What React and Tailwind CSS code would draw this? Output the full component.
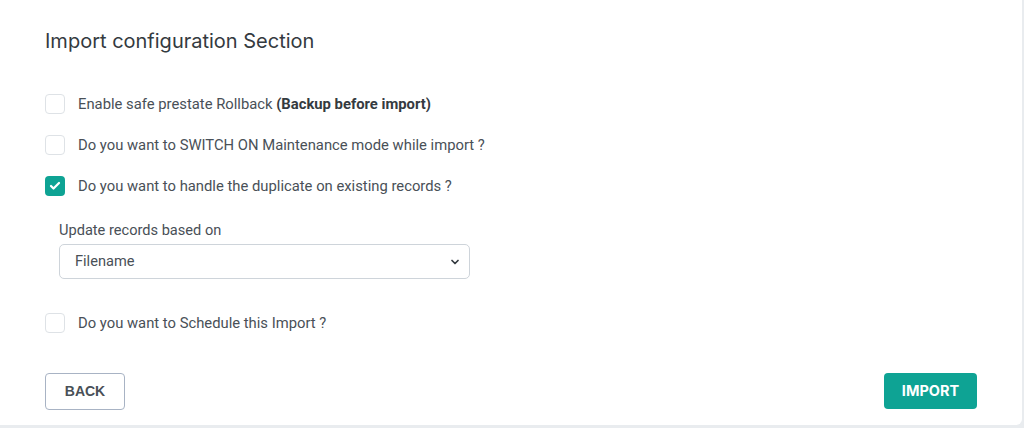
import { Check, ChevronDown } from "lucide-react";

const body = { fontFamily: "Roboto, 'Liberation Sans', sans-serif" };

function CheckRow({ checked, children }) {
  return (
    <label className="flex items-center h-[20px] text-[14.8px] text-[#495057]" style={body}>
      {checked ? (
        <span className="w-[20px] h-[20px] rounded-[4px] bg-[#0ea394] flex items-center justify-center">
          <Check className="w-[12px] h-[12px] text-white" strokeWidth={4.5} />
        </span>
      ) : (
        <span className="w-[20px] h-[20px] rounded-[4px] border border-[#dee2e6] bg-white" />
      )}
      <span className="ml-[13px]">{children}</span>
    </label>
  );
}

export default function App() {
  return (
    <div className="h-screen bg-[#e9ecef]">
      <div className="w-[1022px] h-[425px] bg-white rounded-br-[6px] pl-[45px] pt-[27px] flex flex-col">
        <h2
          className="text-[20px] leading-[28px] text-[#343a40]"
          style={{ fontFamily: "Inter, 'Open Sans', sans-serif" }}
        >
          Import configuration Section
        </h2>

        <div className="mt-[39px] flex flex-col gap-[21px]">
          <CheckRow>
            Enable safe prestate Rollback <b className="font-bold text-[#343a40]">(Backup before import)</b>
          </CheckRow>
          <CheckRow>Do you want to SWITCH ON Maintenance mode while import ?</CheckRow>
          <CheckRow checked>Do you want to handle the duplicate on existing records ?</CheckRow>
        </div>

        <div className="ml-[14px] mt-[24px]" style={body}>
          <div className="text-[14.6px] leading-[20px] text-[#495057]">Update records based on</div>
          <div className="mt-[4px] w-[411px] h-[35px] border border-[#ced4da] rounded-[5px] flex items-center justify-between pl-[15px] pr-[8px] text-[14.6px] text-[#495057]">
            <span>Filename</span>
            <ChevronDown className="w-[12px] h-[12px] text-[#343a40]" strokeWidth={3.5} />
          </div>
        </div>

        <div className="mt-[34px]">
          <CheckRow>Do you want to Schedule this Import ?</CheckRow>
        </div>

        <div className="mt-[40px] pr-[45px] flex justify-between">
          <button
            className="w-[80px] h-[37px] border border-[#a8b3c4] rounded-[4px] text-[14px] font-bold text-[#495057] bg-white"
            style={{ fontFamily: "'Liberation Sans', Arial, sans-serif" }}
          >
            BACK
          </button>
          <button
            className="w-[93px] h-[36px] rounded-[4px] bg-[#0ea394] text-white text-[14.5px] font-bold"
            style={{ fontFamily: "Inter, 'Open Sans', sans-serif" }}
          >
            IMPORT
          </button>
        </div>
      </div>
    </div>
  );
}
